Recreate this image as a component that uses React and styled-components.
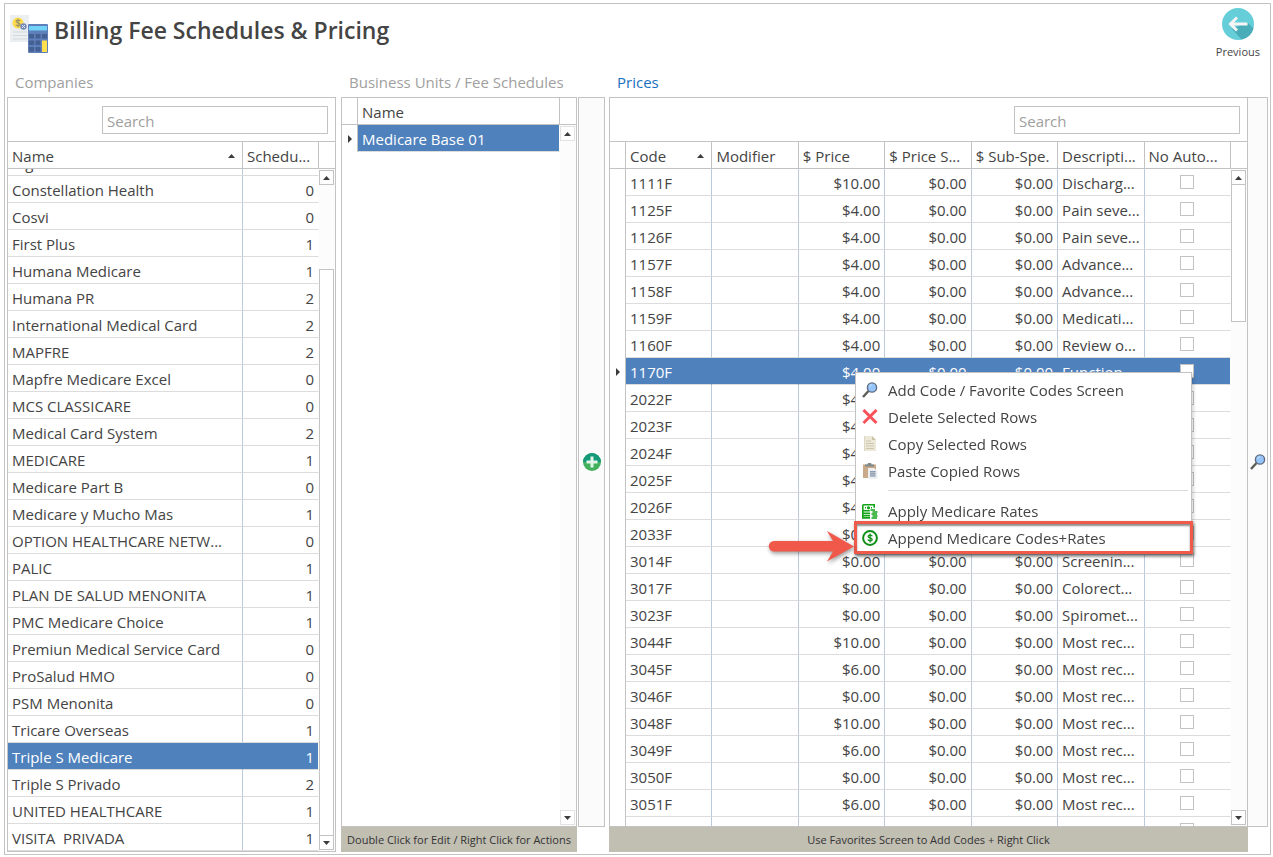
import { useEffect, useRef } from "react"
import styled, { createGlobalStyle, css } from "styled-components"

const lineColor = '#c3c3c3'
const rowLine = '#dcdcdc'
const colLine = '#bccbdb'
const textColor = '#444444'
const selectedColor = '#4f81bd'

const GlobalStyle = createGlobalStyle`
    * {
        box-sizing: border-box;
    }
    body {
        margin: 0;
        background: white;
        color: ${textColor};
        font-family: "Open Sans", "Noto Sans", sans-serif;
        font-size: 15px;
    }
    button, input {
        font-family: inherit;
    }
`

const Page = styled.div`
    height: 100vh;
    padding: 3px 2px 2px 4px;
`

const Frame = styled.main`
    height: 100%;
    display: flex;
    flex-direction: column;
    padding: 0 2px 2px;
    border: 1px solid ${lineColor};
`

const Header = styled.header`
    flex: none;
    height: 64px;
    display: flex;
    justify-content: space-between;
    align-items: flex-start;
    padding: 4px 8px 0 3px;
`

const Title = styled.div`
    display: flex;
    align-items: flex-start;
    gap: 5px;
    padding-top: 6px;
    h1 {
        margin: 0;
        font-size: 23px;
        line-height: 32px;
        font-weight: 600;
        white-space: nowrap;
    }
    svg {
        flex: none;
    }
`

const PreviousButton = styled.button`
    display: flex;
    flex-direction: column;
    align-items: center;
    gap: 3px;
    padding: 0;
    border: 0;
    background: none;
    color: ${textColor};
    font-size: 11px;
    line-height: 18px;
    cursor: pointer;
`

const Workspace = styled.div`
    flex: 1;
    min-height: 0;
    display: grid;
    grid-template-columns: 329px 241px 28px minmax(0, 1fr) 20px;
    grid-template-rows: 29px minmax(0, 1fr) 25px;
`

const Label = styled.h2`
    margin: 0;
    padding-left: ${p => p.$indent}px;
    font-size: 15px;
    line-height: 29px;
    font-weight: normal;
    white-space: nowrap;
    color: ${p => p.$active ? '#1a70c0' : '#a0a0a0'};
    grid-column: ${p => p.$col};
`

const Panel = styled.section`
    position: relative;
    display: flex;
    flex-direction: column;
    min-height: 0;
    border: 1px solid ${lineColor};
    margin-left: ${p => p.$gap || 0}px;
    grid-column: ${p => p.$col};
    grid-row: ${p => p.$row || 2};
`

const Strip = styled.div`
    grid-column: ${p => p.$col};
    grid-row: 2;
    display: flex;
    align-items: center;
    justify-content: center;
    background: #fbfbfb;
    border: 1px solid ${lineColor};
    margin-left: ${p => p.$gap || 0}px;
    ${p => p.$joined && css`border-left: 0;`}
    button {
        display: flex;
        padding: 0;
        border: 0;
        background: none;
        cursor: pointer;
    }
`

const Footer = styled.footer`
    grid-column: ${p => p.$col};
    grid-row: 3;
    display: flex;
    justify-content: center;
    margin-left: ${p => p.$gap}px;
    background: #c1beb2;
    font-size: 11px;
    line-height: 25px;
    white-space: nowrap;
    color: #333333;
`

const Toolbar = styled.div`
    flex: none;
    display: flex;
    justify-content: flex-end;
    padding: 8px 7px 7px;
    border-bottom: 1px solid ${lineColor};
    input {
        width: 226px;
        height: 28px;
        padding: 2px 4px 0;
        border: 1px solid ${lineColor};
        border-radius: 0;
        background: white;
        color: ${textColor};
        font-size: 15px;
    }
    input::placeholder {
        color: #a0a0a0;
        opacity: 1;
    }
`

const GridArea = styled.div`
    flex: 1;
    min-height: 0;
    display: flex;
`

const Viewport = styled.div`
    flex: 1;
    min-width: 0;
    overflow: hidden;
`

const Table = styled.table`
    width: 100%;
    table-layout: fixed;
    border-collapse: separate;
    border-spacing: 0;
    th, td {
        height: 27px;
        padding: 2px 4px 0;
        line-height: 20px;
        font-weight: normal;
        text-align: left;
        white-space: pre;
        overflow: hidden;
    }
    th {
        position: sticky;
        top: 0;
        z-index: 1;
        background: white;
        border-right: 1px solid ${lineColor};
        border-bottom: 1px solid ${lineColor};
    }
`

const HeadCell = styled.div`
    display: flex;
    align-items: center;
    justify-content: space-between;
    padding-right: 3px;
`

const Td = styled.td`
    border-right: 1px solid ${colLine};
    border-bottom: 1px solid ${rowLine};
    &&& {
        text-align: ${p => p.$align || 'left'};
    }
`

const Indicator = styled.td`
    &&& {
        padding: 0 0 0 6px;
    }
    border-right: 1px solid ${lineColor};
    svg {
        display: block;
    }
`

const Tr = styled.tr`
    ${p => p.$selected && css`
        ${Td} {
            background: ${selectedColor};
            background-clip: padding-box;
            color: white;
            border-right-color: ${selectedColor};
        }
    `}
    && ${Td}:last-child {
        border-right-color: #fdfdfd;
    }
`

const Check = styled.input`
    appearance: none;
    display: block;
    width: 14px;
    height: 14px;
    margin: 0 auto 3px;
    border: 1px solid ${lineColor};
    background: white;
`

const ScrollColumn = styled.div`
    flex: none;
    width: 16px;
    display: flex;
    flex-direction: column;
    background: #fcfcfc;
`

const ScrollHead = styled.div`
    flex: none;
    height: 27px;
    background: white;
    border-bottom: 1px solid ${lineColor};
`

const ScrollBar = styled.div`
    flex: 1;
    min-height: 0;
    display: flex;
    flex-direction: column;
    width: 15px;
    padding: 1px 0;
    button {
        flex: none;
        display: flex;
        align-items: center;
        justify-content: center;
        width: 15px;
        height: 15px;
        padding: 0;
        border: 1px solid ${p => p.$light ? '#e2e2e2' : lineColor};
        background: white;
    }
`

const Track = styled.div`
    flex: 1;
    min-height: 0;
    display: flex;
    flex-direction: column;
    justify-content: ${p => p.$end ? 'flex-end' : 'flex-start'};
    margin: -1px 0;
`

const Thumb = styled.div`
    border: 1px solid ${lineColor};
    background: white;
`

const Menu = styled.ul`
    position: absolute;
    z-index: 2;
    left: 245px;
    top: 274px;
    width: 337px;
    margin: 0;
    padding: 3px 0;
    list-style: none;
    background: white;
    border: 1px solid ${lineColor};
    box-shadow: 2px 2px 3px rgb(0 0 0 / 15%);
    li {
        position: relative;
    }
`

const MenuButton = styled.button`
    display: flex;
    align-items: center;
    gap: 10px;
    width: 100%;
    height: 27px;
    padding: 0 6px;
    border: 0;
    background: none;
    color: ${textColor};
    font-size: 15px;
    line-height: 26px;
    text-align: left;
    white-space: nowrap;
    svg {
        flex: none;
    }
`

const Separator = styled.hr`
    margin: 6px 3px 6px 32px;
    border: 0;
    border-top: 1px solid ${rowLine};
`

const Highlight = styled.div`
    position: absolute;
    inset: -3px -2px;
    border: 3px solid #f05a4b;
    box-shadow: 1px 2px 3px rgb(0 0 0 / 50%), inset 0 2px 2px rgb(0 0 0 / 45%);
    pointer-events: none;
`

const Arrow = styled.svg`
    position: absolute;
    right: 100%;
    top: 0;
    pointer-events: none;
    filter: drop-shadow(1px 2px 2px rgb(0 0 0 / 40%));
`

const companies = [
    ['Cigna', 0],
    ['Constellation Health', 0],
    ['Cosvi', 0],
    ['First Plus', 1],
    ['Humana Medicare', 1],
    ['Humana PR', 2],
    ['International Medical Card', 2],
    ['MAPFRE', 2],
    ['Mapfre Medicare Excel', 0],
    ['MCS CLASSICARE', 0],
    ['Medical Card System', 2],
    ['MEDICARE', 1],
    ['Medicare Part B', 0],
    ['Medicare y Mucho Mas', 1],
    ['OPTION HEALTHCARE NETW...', 0],
    ['PALIC', 1],
    ['PLAN DE SALUD MENONITA', 1],
    ['PMC Medicare Choice', 1],
    ['Premiun Medical Service Card', 0],
    ['ProSalud HMO', 0],
    ['PSM Menonita', 0],
    ['Tricare Overseas', 1],
    ['Triple S Medicare', 1],
    ['Triple S Privado', 2],
    ['UNITED HEALTHCARE', 1],
    ['VISITA  PRIVADA', 1],
]

const prices = [
    ['1111F', '10.00', 'Discharg...'],
    ['1125F', '4.00', 'Pain seve...'],
    ['1126F', '4.00', 'Pain seve...'],
    ['1157F', '4.00', 'Advance...'],
    ['1158F', '4.00', 'Advance...'],
    ['1159F', '4.00', 'Medicati...'],
    ['1160F', '4.00', 'Review o...'],
    ['1170F', '4.00', 'Function...'],
    ['2022F', '4.00', 'Dilated r...'],
    ['2023F', '4.00', 'Dilated r...'],
    ['2024F', '4.00', '7 standa...'],
    ['2025F', '4.00', '7 standa...'],
    ['2026F', '4.00', 'Eye ima...'],
    ['2033F', '0.00', 'Eye ima...'],
    ['3014F', '0.00', 'Screenin...'],
    ['3017F', '0.00', 'Colorect...'],
    ['3023F', '0.00', 'Spiromet...'],
    ['3044F', '10.00', 'Most rec...'],
    ['3045F', '6.00', 'Most rec...'],
    ['3046F', '0.00', 'Most rec...'],
    ['3048F', '10.00', 'Most rec...'],
    ['3049F', '6.00', 'Most rec...'],
    ['3050F', '0.00', 'Most rec...'],
    ['3051F', '6.00', 'Most rec...'],
    ['3052F', '6.00', 'Most rec...'],
]

const Triangle = ({ down }) => (
    <svg width="7" height="4" viewBox="0 0 7 4" aria-hidden="true">
        <path d={down ? 'M0 0h7L3.5 4z' : 'M0 4h7L3.5 0z'} fill="#3c3c3c" />
    </svg>
)

const RowMarker = () => (
    <svg width="4" height="8" viewBox="0 0 4 8" aria-hidden="true">
        <path d="M0 0v8l4-4z" fill="#3c3c3c" />
    </svg>
)

const BillingIcon = () => (
    <svg width="39" height="40" viewBox="0 0 39 40" aria-hidden="true">
        <path d="M0 1h19v27H0z" fill="#eceff1" />
        <path d="M3 18h14M3 21.500h14M3 25h14" stroke="#d3d9dd" />
        <circle cx="8" cy="9" r="5.500" fill="#ffdc4d" />
        <path d="M10.300 7.300C9.500 5.500 6 5.700 6.100 7.500c.1 1.700 4.100 1.200 4.100 3.100 0 1.800-3.700 1.800-4.400 0M8.100 4.800v8.400" fill="none" stroke="#9a9668" strokeWidth="1.200" />
        <circle cx="13.500" cy="12.500" r="3.200" fill="#7289bb" />
        <path d="M12 14l3-3M12 11.500h1M14 13.500h1" stroke="#dfe6f5" />
        <rect x="18" y="10" width="20" height="29" rx="1" fill="#5f7fbb" />
        <path d="M19 12h18v4.500H19z" fill="#72d2f7" />
        <path d="M19 20h5v4.500h-5zM25.500 20h5v4.500h-5zM32 20h5v4.500h-5zM19 26.500h5v4.500h-5zM25.500 26.500h5v4.500h-5zM19 33h5v4.500h-5zM25.500 33h5v4.500h-5z" fill="#445f91" />
        <path d="M32 26.500h5V38h-5z" fill="#ffe04f" />
    </svg>
)

const BackIcon = () => (
    <svg width="32" height="32" viewBox="0 0 32 32" aria-hidden="true">
        <circle cx="16" cy="16" r="16" fill="#66ced8" />
        <path d="M25.500 14.500l6 6A16 16 0 0 1 19.500 31.600L10 21l6-3z" fill="#48adb8" />
        <path d="M15 9.500L8.500 16l6.500 6.500M9 16h16.500" fill="none" stroke="#f5f5f5" strokeWidth="3" />
    </svg>
)

const PlusIcon = () => (
    <svg width="18" height="18" viewBox="0 0 18 18" aria-hidden="true">
        <circle cx="9" cy="9" r="9" fill="#43b05c" />
        <path d="M0 9a9 9 0 0 1 18 0z" fill="#149a78" />
        <path d="M7.500 3.500h3v4h4v3h-4v4h-3v-4h-4v-3h4z" fill="#e3f5e8" />
    </svg>
)

const SearchIcon = () => (
    <svg width="16" height="16" viewBox="0 0 16 16" aria-hidden="true">
        <path d="M1 15l5.500-6" stroke="#5d5d55" strokeWidth="2.400" />
        <circle cx="10" cy="5.500" r="4.600" fill="#96c5fb" stroke="#5f6c80" strokeWidth="1.400" />
        <path d="M7.600 5a2.600 2.600 0 0 1 2.400-2.300" fill="none" stroke="#c9e2ff" />
    </svg>
)

const DeleteIcon = () => (
    <svg width="16" height="16" viewBox="0 0 16 16" aria-hidden="true">
        <path d="M1.500 1l13 13M14.500 1l-13 13" stroke="#f9525a" strokeWidth="3" />
    </svg>
)

const CopyIcon = () => (
    <svg width="16" height="16" viewBox="0 0 16 16" aria-hidden="true">
        <path d="M2 0h8l4 4v11H2z" fill="#ece8d8" />
        <path d="M10 0l4 4h-4z" fill="#c9c3a8" />
        <path d="M4 5h5M4 7.500h8M4 10h8M4 12.500h8" stroke="#cbc6b0" />
        <path d="M2.500 0v15" stroke="#dcd7c3" />
    </svg>
)

const PasteIcon = () => (
    <svg width="16" height="16" viewBox="0 0 16 16" aria-hidden="true">
        <path d="M1 1.500h13V15H1z" fill="#c9a98a" />
        <path d="M3 1.500h2.500a2 2 0 0 1 4 0H12v2H3z" fill="#7f8b8b" />
        <path d="M6 5h6l3.500 3v8H6z" fill="#eceff1" />
        <path d="M8 8h5.500v5.500H8z" fill="#b4bfcc" />
        <path d="M8 8.500h5.500M8 10.800h5.500M8 13h5.500" stroke="#8c9aac" />
    </svg>
)

const RatesIcon = () => (
    <svg width="16" height="16" viewBox="0 0 16 16" fill="none" stroke="#12a318" aria-hidden="true">
        <path d="M.8 1.800h11.400v3M.8 1.800v6h7" strokeWidth="1.600" />
        <path d="M3 4.800h1M9 4.800h1" strokeWidth="1.500" />
        <circle cx="6.500" cy="4.800" r="1.600" fill="#12a318" stroke="none" />
        <path d="M0 10.300h8M0 12.600h8M0 14.900h8M.8 7v8" strokeWidth="1.600" />
        <path d="M8.500 7h4.500M10.500 9h5M9.500 11h5.500M10.500 13h5M9.500 15h5.500" strokeWidth="1.400" />
    </svg>
)

const DollarIcon = () => (
    <svg width="16" height="16" viewBox="0 0 16 16" fill="none" stroke="#0f8f18" aria-hidden="true">
        <circle cx="8" cy="8" r="6.900" strokeWidth="2" />
        <path d="M10.300 6.300C9.500 4.500 6 4.700 6.100 6.500c.1 1.700 4.100 1.200 4.100 3.100 0 1.800-3.700 1.800-4.400 0M8.100 3.500v9" strokeWidth="1.300" />
    </svg>
)

function SearchBox({ label }) {
    return (
        <Toolbar>
            <input type="text" placeholder="Search" aria-label={label} />
        </Toolbar>
    )
}

function Scroller({ light, end, size }) {
    return (
        <ScrollColumn>
            <ScrollHead />
            <ScrollBar $light={light}>
                <button aria-label="Scroll up"><Triangle /></button>
                <Track $end={end}>
                    {size && <Thumb style={{ height: size + '%' }} />}
                </Track>
                <button aria-label="Scroll down"><Triangle down /></button>
            </ScrollBar>
        </ScrollColumn>
    )
}

function Companies() {
    const viewport = useRef(null)
    useEffect(() => {
        // the list opens at its last company
        viewport.current.scrollTop = viewport.current.scrollHeight
    }, [])
    return (
        <Panel $col={1} $row="2 / 4">
            <SearchBox label="Search companies" />
            <GridArea>
                <Viewport ref={viewport}>
                    <Table>
                        <colgroup>
                            <col />
                            <col style={{ width: 76 }} />
                        </colgroup>
                        <thead>
                            <tr>
                                <th><HeadCell>Name<Triangle /></HeadCell></th>
                                <th>Schedu...</th>
                            </tr>
                        </thead>
                        <tbody>
                            {companies.map(([name, count]) => (
                                <Tr key={name} $selected={name === 'Triple S Medicare'}>
                                    <Td>{name}</Td>
                                    <Td $align="right">{count}</Td>
                                </Tr>
                            ))}
                        </tbody>
                    </Table>
                </Viewport>
                <Scroller end size={87} />
            </GridArea>
        </Panel>
    )
}

function Schedules() {
    return (
        <Panel $col={2} $gap={5}>
            <GridArea>
                <Viewport>
                    <Table>
                        <colgroup>
                            <col style={{ width: 16 }} />
                            <col />
                        </colgroup>
                        <thead>
                            <tr>
                                <th></th>
                                <th>Name</th>
                            </tr>
                        </thead>
                        <tbody>
                            <Tr $selected>
                                <Indicator><RowMarker /></Indicator>
                                <Td>Medicare Base 01</Td>
                            </Tr>
                        </tbody>
                    </Table>
                </Viewport>
                <Scroller light />
            </GridArea>
        </Panel>
    )
}

function PriceMenu() {
    return (
        <Menu>
            <li><MenuButton><SearchIcon />Add Code / Favorite Codes Screen</MenuButton></li>
            <li><MenuButton><DeleteIcon />Delete Selected Rows</MenuButton></li>
            <li><MenuButton><CopyIcon />Copy Selected Rows</MenuButton></li>
            <li><MenuButton><PasteIcon />Paste Copied Rows</MenuButton></li>
            <li><Separator /></li>
            <li><MenuButton><RatesIcon />Apply Medicare Rates</MenuButton></li>
            <li>
                <MenuButton><DollarIcon />Append Medicare Codes+Rates</MenuButton>
                <Highlight />
                <Arrow width="88" height="44" viewBox="0 0 88 44">
                    <path d="M6 17h59l-6-10 27 15.500-27 15 6-10H6a5 5 0 0 1 0-10.500z" fill="#f0594a" />
                </Arrow>
            </li>
        </Menu>
    )
}

function Prices() {
    return (
        <Panel $col={4} $gap={4}>
            <SearchBox label="Search prices" />
            <GridArea>
                <Viewport>
                    <Table>
                        <colgroup>
                            <col style={{ width: 16 }} />
                            <col span="7" />
                        </colgroup>
                        <thead>
                            <tr>
                                <th></th>
                                <th><HeadCell>Code<Triangle /></HeadCell></th>
                                <th>Modifier</th>
                                <th>$ Price</th>
                                <th>$ Price S...</th>
                                <th>$ Sub-Spe.</th>
                                <th>Descripti...</th>
                                <th>No Auto...</th>
                            </tr>
                        </thead>
                        <tbody>
                            {prices.map(([code, price, description]) => (
                                <Tr key={code} $selected={code === '1170F'}>
                                    <Indicator>{code === '1170F' && <RowMarker />}</Indicator>
                                    <Td>{code}</Td>
                                    <Td></Td>
                                    <Td $align="right">${price}</Td>
                                    <Td $align="right">$0.00</Td>
                                    <Td $align="right">$0.00</Td>
                                    <Td>{description}</Td>
                                    <Td><Check type="checkbox" aria-label={'No auto ' + code} /></Td>
                                </Tr>
                            ))}
                        </tbody>
                    </Table>
                </Viewport>
                <Scroller size={22} />
            </GridArea>
            <PriceMenu />
        </Panel>
    )
}

function App() {
    return (
        <Page>
            <GlobalStyle />
            <Frame>
                <Header>
                    <Title>
                        <BillingIcon />
                        <h1>Billing Fee Schedules &amp; Pricing</h1>
                    </Title>
                    <PreviousButton><BackIcon />Previous</PreviousButton>
                </Header>
                <Workspace>
                    <Label $col={1} $indent={8}>Companies</Label>
                    <Label $col={2} $indent={13}>Business Units / Fee Schedules</Label>
                    <Label $col={4} $indent={12} $active>Prices</Label>
                    <Companies />
                    <Schedules />
                    <Strip $col={3} $gap={1}>
                        <button aria-label="Add"><PlusIcon /></button>
                    </Strip>
                    <Prices />
                    <Strip $col={5} $joined>
                        <button aria-label="Favorites"><SearchIcon /></button>
                    </Strip>
                    <Footer $col={2} $gap={5}>Double Click for Edit / Right Click for Actions</Footer>
                    <Footer $col={4} $gap={4}>Use Favorites Screen to Add Codes + Right Click</Footer>
                </Workspace>
            </Frame>
        </Page>
    )
}

export default App
